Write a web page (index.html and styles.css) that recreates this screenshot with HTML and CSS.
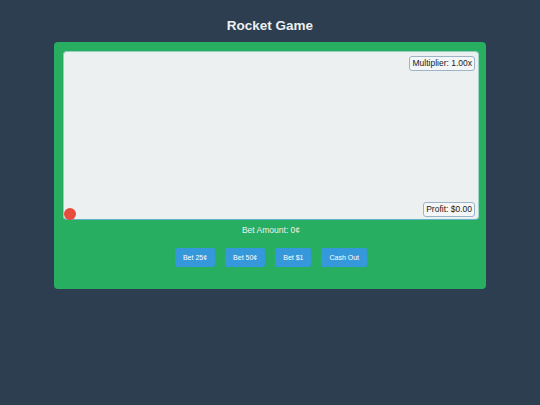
FILE: index.html
```html
<!DOCTYPE html>
<html>
<head>
<meta charset="utf-8">
<link rel="stylesheet" href="styles.css">
</head>
<body>
<h1 class="title">Rocket Game</h1>
<div class="game">
  <div class="canvas">
    <div class="badge multiplier">Multiplier: 1.00x</div>
    <div class="badge profit">Profit: $0.00</div>
    <div class="rocket"></div>
  </div>
  <p class="bet">Bet Amount: 0¢</p>
  <div class="buttons">
    <button class="btn">Bet 25¢</button>
    <button class="btn">Bet 50¢</button>
    <button class="btn">Bet $1</button>
    <button class="btn">Cash Out</button>
  </div>
</div>
</body>
</html>
```
FILE: styles.css
```css
html, body {
  margin: 0;
  padding: 0;
}
body {
  background: #2c3e50;
  font-family: "Liberation Sans", Arial, sans-serif;
  color: #ecf0f1;
}
.title {
  margin: 18px 0 8px;
  font-size: 13.5px;
  line-height: 16px;
  font-weight: bold;
  text-align: center;
}
.game {
  width: 432px;
  margin: 0 auto;
  background: #27ae60;
  border-radius: 4px;
  padding: 9px 7px 22px 9px;
  box-sizing: border-box;
}
.canvas {
  position: relative;
  height: 169px;
  box-sizing: border-box;
  background: #ecf0f1;
  border: 1px solid #8fcfc0;
  border-bottom-color: #5fb3c4;
  border-right-color: #9fd6c8;
  border-radius: 4px;
}
.badge {
  position: absolute;
  right: 3px;
  font-size: 8.5px;
  line-height: 11px;
  color: #1a1a1a;
  background: #f4f6f7;
  border: 1px solid #9bb4c8;
  border-radius: 3px;
  padding: 1px 2px;
}
.multiplier {
  top: 4px;
}
.profit {
  bottom: 2px;
}
.rocket {
  position: absolute;
  left: 0;
  bottom: -1px;
  width: 12px;
  height: 12px;
  border-radius: 50%;
  background: #e74c3c;
}
.bet {
  margin: 5px 0 0;
  font-size: 8.5px;
  line-height: 10px;
  text-align: center;
  color: #ecf0f1;
}
.buttons {
  display: flex;
  justify-content: center;
  gap: 10px;
  margin-top: 13px;
}
.btn {
  height: 19px;
  padding: 0 8px;
  border: none;
  border-radius: 2px;
  background: #3498db;
  color: #ffffff;
  font-family: "Liberation Sans", Arial, sans-serif;
  font-size: 7px;
}
```
